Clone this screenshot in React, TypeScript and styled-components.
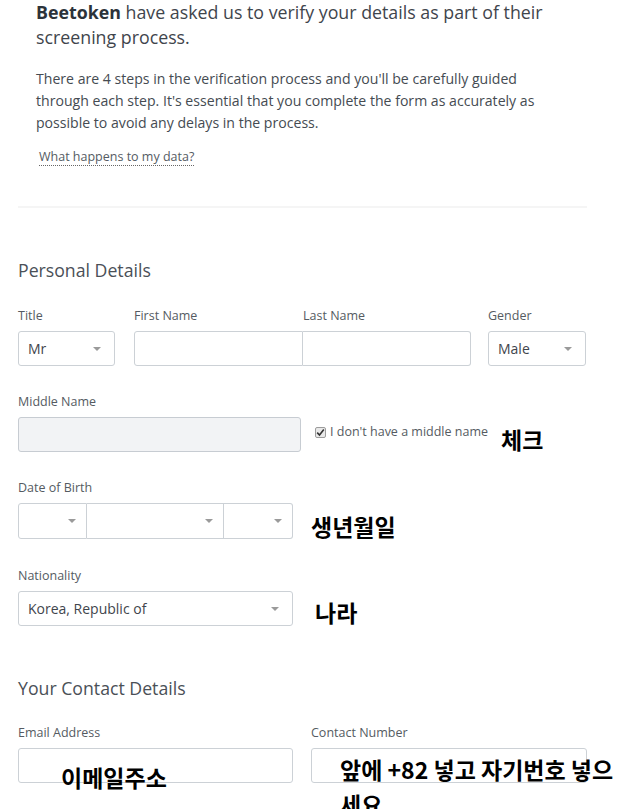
import styled, { createGlobalStyle } from 'styled-components';

const GlobalStyle = createGlobalStyle`
  body {
    margin: 0;
    background: #fff;
    color: #454b52;
    font-family: 'Open Sans', 'Noto Sans', sans-serif;
  }
`;

function Select({ value, width }: { value?: string; width?: number }) {
  return (
    <SelectBox style={width ? { width } : undefined}>
      <span>{value}</span>
      <Caret />
    </SelectBox>
  );
}

function App() {
  return (
    <Page>
      <GlobalStyle />
      {/* Intro */}
      <Intro>
        <Heading>
          <strong>Beetoken</strong> have asked us to verify your details as part of their
          screening process.
        </Heading>
        <Lead>
          There are 4 steps in the verification process and you'll be carefully guided through
          each step. It's essential that you complete the form as accurately as possible to avoid
          any delays in the process.
        </Lead>
        <DataLink>What happens to my data?</DataLink>
      </Intro>
      <Divider />

      {/* Personal Details */}
      <SectionTitle>Personal Details</SectionTitle>
      <NameRow>
        <Field>
          <Label>Title</Label>
          <Select value="Mr" />
        </Field>
        <NameField>
          <GroupCell>
            <Label>First Name</Label>
            <GroupInput $first />
          </GroupCell>
          <GroupCell>
            <Label>Last Name</Label>
            <GroupInput />
          </GroupCell>
        </NameField>
        <Field>
          <Label>Gender</Label>
          <Select value="Male" />
        </Field>
      </NameRow>

      <MiddleRow>
        <Field>
          <Label>Middle Name</Label>
          <TextInput $disabled />
        </Field>
        <CheckLabel>
          <CheckBox>
            <svg width="9" height="9" viewBox="0 0 9 9">
              <path d="M1.2 4.6 L3.5 7 L7.8 1.6" fill="none" stroke="#333" strokeWidth="1.6" />
            </svg>
          </CheckBox>
          I don't have a middle name
        </CheckLabel>
        <Note style={{ left: 483, top: 28 }}>체크</Note>
      </MiddleRow>

      <DateRow>
        <Field>
          <Label>Date of Birth</Label>
          <DateGroup>
            <DatePart $w={69} $pos="first" />
            <DatePart $w={137} $pos="mid" />
            <DatePart $w={69} $pos="last" />
          </DateGroup>
        </Field>
        <Note style={{ left: 293, top: 29 }}>생년월일</Note>
      </DateRow>

      <FieldRow>
        <Field>
          <Label>Nationality</Label>
          <Select value="Korea, Republic of" width={275} />
        </Field>
        <Note style={{ left: 297, top: 27 }}>나라</Note>
      </FieldRow>

      {/* Contact Details */}
      <SectionTitle>Your Contact Details</SectionTitle>
      <ContactRow>
        <Field>
          <Label>Email Address</Label>
          <TextInput />
        </Field>
        <Field>
          <Label>Contact Number</Label>
          <TextInput />
        </Field>
        <Note style={{ left: 43, top: 35 }}>이메일주소</Note>
        <Note style={{ left: 322, top: 27, width: 290 }}>앞에 +82 넣고 자기번호 넣으세요</Note>
      </ContactRow>
    </Page>
  );
}

const Page = styled.div`
  width: 569px;
  min-height: 809px;
  padding-left: 18px;
`;

/* Intro */

const Intro = styled.div`
  width: 520px;
  padding-left: 18px;
`;

const Heading = styled.h2`
  margin: 0;
  color: #3f454c;
  font-weight: 400;
  font-size: 17.8px;
  line-height: 25px;

  strong {
    color: #2c333a;
    font-weight: 700;
  }
`;

const Lead = styled.p`
  margin: 18px 0 0;
  font-size: 14.1px;
  line-height: 22px;
  color: #454b52;
`;

const DataLink = styled.span`
  display: inline-block;
  margin: 14px 0 0 3px;
  color: #555b63;
  font-size: 12.5px;
  line-height: 17px;
  border-bottom: 1px dotted #666;
`;

const Divider = styled.div`
  height: 2px;
  margin-top: 40px;
  background: #f5f5f5;
`;

const SectionTitle = styled.h3`
  margin: 50px 0 0;
  color: #4a5057;
  font-weight: 400;
  font-size: 17.7px;
  line-height: 24px;
`;

/* Fields */

const Field = styled.div`
  display: flex;
  flex-direction: column;
`;

const Label = styled.div`
  margin-bottom: 7px;
  color: #555b62;
  font-size: 12.5px;
  line-height: 16px;
`;

const NameRow = styled.div`
  display: grid;
  grid-template-columns: 97px 337px 98px;
  column-gap: 18px;
  margin-top: 26px;
`;

const NameField = styled.div`
  display: grid;
  grid-template-columns: 169px 168px;
  margin-left: 1px;
`;

const FieldRow = styled.div`
  position: relative;
  margin-top: 29px;
`;

const MiddleRow = styled(FieldRow)`
  display: flex;
  align-items: flex-start;
  margin-top: 28px;
`;

const DateRow = styled(FieldRow)`
  margin-top: 28px;
`;

const ContactRow = styled.div`
  position: relative;
  display: grid;
  grid-template-columns: 275px 276px;
  column-gap: 18px;
  margin-top: 25px;
`;

const SelectBox = styled.div`
  display: flex;
  align-items: center;
  justify-content: space-between;
  box-sizing: border-box;
  height: 35px;
  padding: 0 13px 0 9px;
  color: #3f454c;
  font-size: 14px;
  background: #fff;
  border: 1px solid #ccd1d6;
  border-radius: 3px;
`;

const Caret = styled.span`
  width: 0;
  height: 0;
  border-top: 4px solid #9a9a9a;
  border-right: 4px solid transparent;
  border-left: 4px solid transparent;
`;

const TextInput = styled.div<{ $disabled?: boolean }>`
  box-sizing: border-box;
  width: ${({ $disabled }) => ($disabled ? '283px' : '100%')};
  height: 35px;
  background: ${({ $disabled }) => ($disabled ? '#f2f3f5' : '#fff')};
  border: 1px solid ${({ $disabled }) => ($disabled ? '#c7ccd2' : '#ccd1d6')};
  border-radius: 3px;
`;

const GroupCell = styled.div`
  display: flex;
  flex-direction: column;
`;

const GroupInput = styled.div<{ $first?: boolean }>`
  box-sizing: border-box;
  height: 35px;
  border: 1px solid #ccd1d6;
  border-left-width: ${({ $first }) => ($first ? '1px' : '0')};
  border-radius: ${({ $first }) => ($first ? '3px 0 0 3px' : '0 3px 3px 0')};
`;

const DateGroup = styled.div`
  display: flex;
  width: 275px;
`;

const DatePart = styled.div<{ $w: number; $pos: 'first' | 'mid' | 'last' }>`
  position: relative;
  box-sizing: border-box;
  width: ${({ $w }) => $w}px;
  height: 36px;
  border: 1px solid #ccd1d6;
  border-left-width: ${({ $pos }) => ($pos === 'first' ? '1px' : '0')};
  border-radius: ${({ $pos }) =>
    $pos === 'first' ? '3px 0 0 3px' : $pos === 'last' ? '0 3px 3px 0' : '0'};

  &::after {
    content: '';
    position: absolute;
    top: 15px;
    right: 10px;
    border-top: 4px solid #9a9a9a;
    border-right: 4px solid transparent;
    border-left: 4px solid transparent;
  }
`;

const CheckLabel = styled.label`
  display: flex;
  align-items: center;
  margin: 30px 0 0 14px;
  color: #555b62;
  font-size: 12.5px;
  line-height: 16px;
`;

const CheckBox = styled.span`
  display: inline-flex;
  align-items: center;
  justify-content: center;
  box-sizing: border-box;
  width: 11px;
  height: 11px;
  margin-right: 4px;
  background: #e9e9e9;
  border: 1px solid #9c9c9c;
  border-radius: 2px;
`;

/* Korean annotations over the screenshot */

const Note = styled.span`
  position: absolute;
  color: #000;
  font-family: 'Noto Sans CJK KR', sans-serif;
  font-weight: 700;
  font-size: 23px;
  line-height: 35px;
  word-break: break-all;
`;

export default App;
